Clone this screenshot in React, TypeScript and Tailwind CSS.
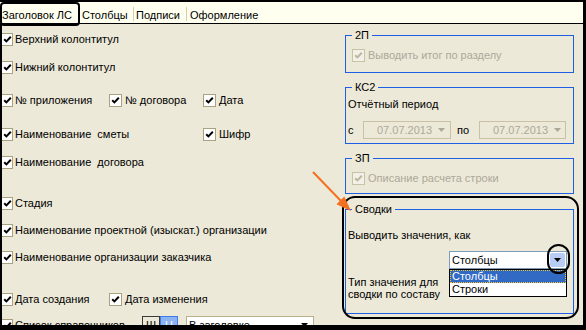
import React from 'react'

function Check({ cut, disabled }: { cut?: boolean; disabled?: boolean }) {
  const box = cut
    ? 'w-[11px] border-y border-r'
    : 'w-[13px] border'
  const tone = disabled ? 'border-[#c9c3a6] bg-[#f3f1e7]' : 'border-[#a9a180] bg-white'
  return (
    <span className={`flex h-[13px] shrink-0 items-center justify-center ${box} ${tone}`}>
      <svg width="9" height="9" viewBox="0 0 9 9">
        <path
          d="M1.2 4.2 L3.4 6.4 L7.8 1.8"
          fill="none"
          stroke={disabled ? '#bdb69c' : '#000'}
          strokeWidth="2"
        />
      </svg>
    </span>
  )
}

function Item({ label, cut, w, disabled }: { label: string; cut?: boolean; w?: string; disabled?: boolean }) {
  return (
    <div className={`flex items-center ${w ?? ''}`}>
      <Check cut={cut} disabled={disabled} />
      <span className={`${cut ? 'ml-[2px]' : 'ml-[3px]'} whitespace-pre ${disabled ? 'text-[#aca899]' : ''}`}>{label}</span>
    </div>
  )
}

function Row({ mt, children }: { mt: string; children: React.ReactNode }) {
  return <div className={`flex h-[14px] shrink-0 items-center ${mt}`}>{children}</div>
}

function DateBox() {
  return (
    <div className="flex h-[18px] items-center border border-[#c9c1a3] pl-[13px] text-[#aca899]">
      <span>07.07.2013</span>
      <svg className="ml-[6px]" width="7" height="4" viewBox="0 0 7 4">
        <path d="M0 0 H7 L3.5 4 Z" fill="#aca899" />
      </svg>
    </div>
  )
}

export default function App() {
  return (
    <div className="relative flex h-[330px] w-[586px] flex-col overflow-hidden bg-black pt-[2px] pr-[3px] pb-[5px] text-[11px] leading-[13px] text-black font-['Liberation_Sans',Arial,sans-serif]">
      {/* tabs */}
      <div className="flex h-[22px] shrink-0 items-start border-b border-black bg-[#fffff0] pt-[7px]">
        <div className="w-[79px] pl-[2px]">Заголовок ЛС</div>
        <div className="mt-[-2px] h-[14px] w-px bg-[#d3cdb2]" />
        <div className="w-[53px] pl-[2px]">Столбцы</div>
        <div className="mt-[-2px] h-[14px] w-px bg-[#d3cdb2]" />
        <div className="w-[52px] pl-[2px]">Подписи</div>
        <div className="mt-[-2px] h-[14px] w-px bg-[#d3cdb2]" />
        <div className="pl-[3px]">Оформление</div>
      </div>

      <div className="flex min-h-0 flex-1 overflow-hidden border-l-2 border-black bg-[#ece9d8]">
        {/* left column */}
        <div className="flex w-[343px] shrink-0 flex-col">
          <Row mt="mt-[8px]">
            <Item cut label="Верхний колонтитул" />
          </Row>
          <Row mt="mt-[14px]">
            <Item cut label="Нижний колонтитул" />
          </Row>
          <Row mt="mt-[19px]">
            <Item cut w="w-[107px]" label="№ приложения" />
            <Item w="w-[94px]" label="№ договора" />
            <Item label="Дата" />
          </Row>
          <Row mt="mt-[20px]">
            <Item cut w="w-[201px]" label="Наименование  сметы" />
            <Item label="Шифр" />
          </Row>
          <Row mt="mt-[14px]">
            <Item cut label="Наименование  договора" />
          </Row>
          <Row mt="mt-[27px]">
            <Item cut label="Стадия" />
          </Row>
          <Row mt="mt-[13px]">
            <Item cut label="Наименование проектной (изыскат.) организации" />
          </Row>
          <Row mt="mt-[13px]">
            <Item cut label="Наименование организации заказчика" />
          </Row>
          <Row mt="mt-[28px]">
            <Item cut w="w-[107px]" label="Дата создания" />
            <Item label="Дата изменения" />
          </Row>
          <div className="mt-[10px] flex h-[18px] shrink-0 items-center">
            <Item cut w="w-[140px]" label="Список справочников" />
            <div className="flex h-[18px] w-[18px] items-center justify-center border border-[#3a3a3a]">Ш</div>
            <div className="flex h-[18px] w-[18px] items-center justify-center border border-[#3d7be6] bg-[#8eb3f2] text-white">Н</div>
            <div className="ml-[8px] flex h-[18px] w-[128px] items-center justify-between border border-[#b9b18e] bg-white pl-[2px] pr-[5px]">
              <span>В заголовке</span>
              <svg width="7" height="4" viewBox="0 0 7 4">
                <path d="M0 0 H7 L3.5 4 Z" fill="#000" />
              </svg>
            </div>
          </div>
        </div>

        {/* right column */}
        <div className="flex w-[229px] shrink-0 flex-col pt-[4px]">
          <fieldset className="h-[45px] shrink-0 border border-[#1e5fe6]">
            <legend className="ml-[6px] px-[3px] leading-[14px]">2П</legend>
            <div className="mt-[6px] flex h-[14px] items-center pl-[6px]">
              <Item disabled label="Выводить итог по разделу" />
            </div>
          </fieldset>

          <fieldset className="mt-[7px] h-[64px] shrink-0 border border-[#1e5fe6]">
            <legend className="ml-[6px] px-[3px] leading-[14px]">КС2</legend>
            <div className="mt-[4px] pl-[2px]">Отчётный период</div>
            <div className="mt-[10px] flex items-center pl-[2px]">
              <span className="w-[15px]">с</span>
              <div className="w-[88px]">
                <DateBox />
              </div>
              <span className="ml-[6px] w-[22px]">по</span>
              <div className="w-[87px]">
                <DateBox />
              </div>
            </div>
          </fieldset>

          <fieldset className="mt-[7px] h-[43px] shrink-0 border border-[#1e5fe6]">
            <legend className="ml-[6px] px-[3px] leading-[14px]">ЗП</legend>
            <div className="mt-[6px] flex h-[14px] items-center pl-[6px]">
              <Item disabled label="Описание расчета строки" />
            </div>
          </fieldset>

          <fieldset className="mt-[8px] h-[112px] shrink-0 border border-[#1e5fe6]">
            <legend className="ml-[6px] px-[3px] leading-[14px]">Сводки</legend>
            <div className="mt-[13px] pl-[2px]">Выводить значения, как</div>
            <div className="mt-[9px] flex">
              <div className="mt-[25px] w-[103px] pl-[2px] leading-[12px]">
                Тип значения для
                <br />
                сводки по составу
              </div>
              <div className="w-[118px]">
                <div className="flex h-[18px] items-center justify-between border border-[#7f9db9] bg-white pl-[2px] pr-px">
                  <span>Столбцы</span>
                  <div className="flex h-[14px] w-[15px] items-center justify-center rounded-[2px] bg-[#b7cdf6]">
                    <svg width="7" height="4" viewBox="0 0 7 4">
                      <path d="M0 0 H7 L3.5 4 Z" fill="#000" />
                    </svg>
                  </div>
                </div>
                <div className="border border-black bg-white">
                  <div className="h-[13px] border border-dotted border-[#f2c230] bg-[#316ac5] pl-px leading-[11px] text-white">Столбцы</div>
                  <div className="h-[13px] pl-[2px] leading-[13px]">Строки</div>
                </div>
              </div>
            </div>
          </fieldset>
        </div>
      </div>

      {/* hand-drawn highlights */}
      <div className="pointer-events-none absolute left-0 top-[2px] h-[24px] w-[80px] rounded-[4px] border-2 border-black" />
      <div className="pointer-events-none absolute left-[342px] top-[196px] h-[123px] w-[237px] rounded-[13px] border-2 border-black" />
      <div className="pointer-events-none absolute left-[547px] top-[244px] h-[30px] w-[23px] rounded-full border-2 border-black" />
      <svg className="pointer-events-none absolute left-0 top-0" width="586" height="330" viewBox="0 0 586 330">
        <line x1="313" y1="172" x2="341" y2="201" stroke="#f37021" strokeWidth="2" />
        <polygon points="351,211 336.5,204.3 344.3,196.5" fill="#f37021" />
      </svg>
    </div>
  )
}
